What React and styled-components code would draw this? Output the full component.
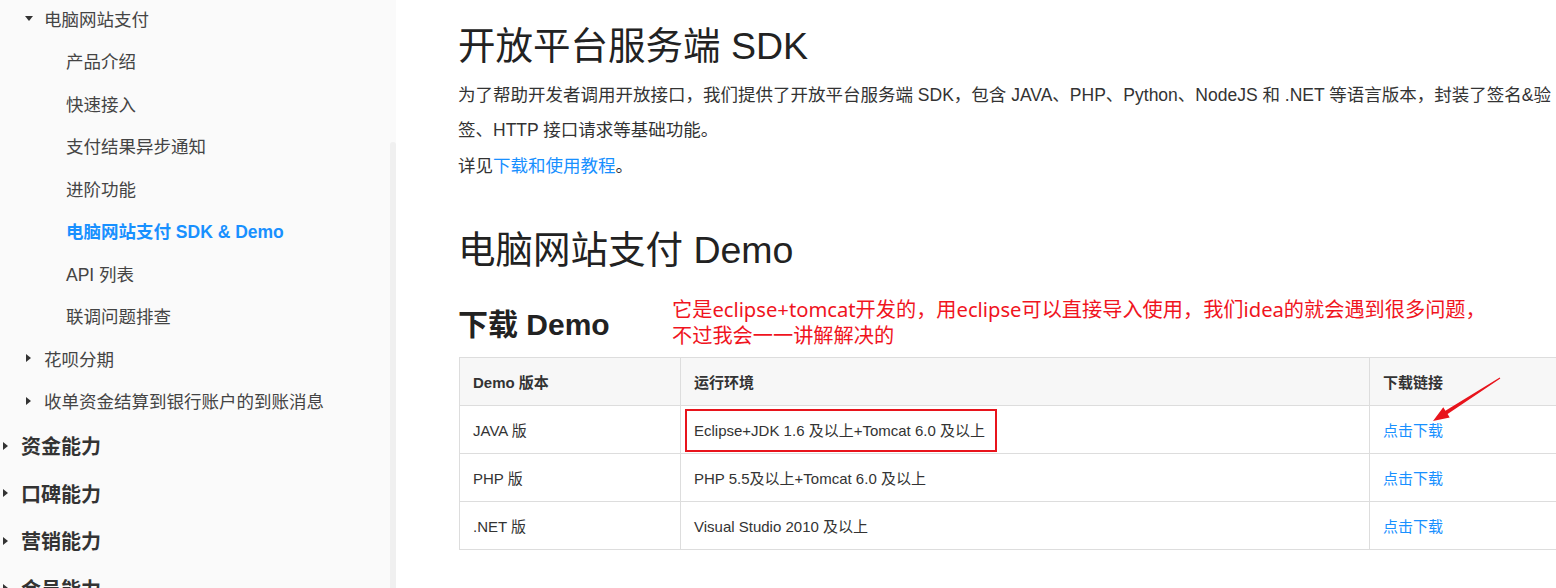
import React from "react";
import styled, { createGlobalStyle } from "styled-components";

const GlobalStyle = createGlobalStyle`
  html, body {
    margin: 0;
    padding: 0;
    background: #fff;
    overflow: hidden;
  }
  body {
    font-family: "Liberation Sans", "Noto Sans CJK SC", sans-serif;
    color: #333;
  }
  * {
    box-sizing: border-box;
  }
`;

const Page = styled.div`
  position: relative;
  display: flex;
  width: 1556px;
  height: 588px;
  overflow: hidden;
`;

const Sidebar = styled.aside`
  position: relative;
  flex: 0 0 396px;
  height: 100%;
  background: #fafafa;
  overflow: hidden;
`;

const ScrollThumb = styled.div`
  position: absolute;
  right: 0;
  top: 142px;
  bottom: 0;
  width: 6px;
  background: #f0f0f0;
  border-radius: 3px 3px 0 0;
`;

const Menu = styled.ul`
  list-style: none;
  margin: -3px 0 0;
  padding: 0;
  display: flex;
  flex-direction: column;
`;

const MenuItem = styled.li`
  position: relative;
  display: flex;
  align-items: center;
  height: ${(p) => (p.$top ? "47.5px" : "42.5px")};
  padding-left: ${(p) => p.$indent}px;
  font-size: ${(p) => (p.$top ? "20px" : "17.5px")};
  font-weight: ${(p) => (p.$top || p.$active ? 700 : 400)};
  color: ${(p) => (p.$active ? "#1890ff" : p.$top ? "#333" : "#444")};
  white-space: nowrap;
`;

const Caret = styled.span`
  position: absolute;
  left: ${(p) => p.$left}px;
  top: 50%;
  width: 0;
  height: 0;
  ${(p) =>
    p.$open
      ? `
    margin-top: -2px;
    border-left: 4px solid transparent;
    border-right: 4px solid transparent;
    border-top: 5px solid #333;
  `
      : `
    margin-top: -4px;
    border-top: 4px solid transparent;
    border-bottom: 4px solid transparent;
    border-left: 5px solid #333;
  `}
`;

const Main = styled.main`
  flex: 1;
  padding-left: 62px;
  overflow: hidden;
`;

const Title = styled.h1`
  margin: 21px 0 0;
  font-size: 37.5px;
  line-height: 50px;
  font-weight: 400;
  color: #222;
  white-space: nowrap;
`;

const Paragraph = styled.p`
  margin: ${(p) => (p.$first ? "6.5px" : "0")} 0 0;
  font-size: 17.5px;
  line-height: 35.5px;
  color: #333;
  width: 1100px;
`;

const Link = styled.a`
  color: #1890ff;
  text-decoration: none;
`;

const SectionTitle = styled.h2`
  margin: 41px 0 0;
  font-size: 37.5px;
  line-height: 50px;
  font-weight: 400;
  color: #222;
`;

const SubHeader = styled.div`
  position: relative;
  margin-top: 30px;
`;

const SubTitle = styled.h3`
  margin: 0;
  font-size: 30px;
  line-height: 40px;
  font-weight: 700;
  color: #222;
`;

const Note = styled.div`
  position: absolute;
  left: 214px;
  top: -9px;
  font-family: "Noto Sans", "Noto Sans CJK SC", sans-serif;
  font-size: 20.2px;
  line-height: 26px;
  color: #f0141e;
  white-space: nowrap;
`;

const Table = styled.table`
  margin-top: 12px;
  margin-left: 1px;
  width: 1130px;
  border-collapse: collapse;
  font-size: 15px;
  table-layout: fixed;
`;

const Th = styled.th`
  height: 48px;
  padding: 0 13px;
  background: #f7f7f7;
  border: 1px solid #dddddd;
  text-align: left;
  font-weight: 700;
  color: #333;
  white-space: nowrap;
`;

const Td = styled.td`
  position: relative;
  height: 48px;
  padding: 0 13px;
  border: 1px solid #dddddd;
  color: #333;
  white-space: nowrap;
`;

const Highlight = styled.span`
  position: absolute;
  left: 4px;
  top: 3px;
  width: 312px;
  height: 43px;
  border: 2px solid #e8141c;
  pointer-events: none;
`;

const Overlay = styled.svg`
  position: absolute;
  left: 0;
  top: 0;
  pointer-events: none;
`;

const subMenu = [
  "产品介绍",
  "快速接入",
  "支付结果异步通知",
  "进阶功能",
  "电脑网站支付 SDK & Demo",
  "API 列表",
  "联调问题排查",
];

const rows = [
  { name: "JAVA 版", env: "Eclipse+JDK 1.6 及以上+Tomcat 6.0 及以上", mark: true },
  { name: "PHP 版", env: "PHP 5.5及以上+Tomcat 6.0 及以上" },
  { name: ".NET 版", env: "Visual Studio 2010 及以上" },
];

const App = () => {
  return (
    <Page>
      <GlobalStyle />
      <Sidebar>
        <Menu>
          <MenuItem $indent={44}>
            <Caret $left={25} $open />
            电脑网站支付
          </MenuItem>
          {subMenu.map((item, i) => (
            <MenuItem key={item} $indent={66} $active={i === 4}>
              {item}
            </MenuItem>
          ))}
          <MenuItem $indent={44}>
            <Caret $left={26} />
            花呗分期
          </MenuItem>
          <MenuItem $indent={44}>
            <Caret $left={26} />
            收单资金结算到银行账户的到账消息
          </MenuItem>
          {["资金能力", "口碑能力", "营销能力", "会员能力"].map((item) => (
            <MenuItem key={item} $indent={21} $top>
              <Caret $left={3} />
              {item}
            </MenuItem>
          ))}
        </Menu>
        <ScrollThumb />
      </Sidebar>

      <Main>
        <Title>开放平台服务端 SDK</Title>
        <Paragraph $first>
          为了帮助开发者调用开放接口，我们提供了开放平台服务端 SDK，包含 JAVA、PHP、Python、NodeJS 和 .NET 等语言版本，封装了签名&验签、HTTP 接口请求等基础功能。
        </Paragraph>
        <Paragraph>
          详见<Link href="#">下载和使用教程</Link>。
        </Paragraph>

        <SectionTitle>电脑网站支付 Demo</SectionTitle>
        <SubHeader>
          <SubTitle>下载 Demo</SubTitle>
          <Note>
            它是eclipse+tomcat开发的，用eclipse可以直接导入使用，我们idea的就会遇到很多问题，
            <br />
            不过我会一一讲解解决的
          </Note>
        </SubHeader>

        <Table>
          <colgroup>
            <col style={{ width: 221 }} />
            <col style={{ width: 689 }} />
            <col />
          </colgroup>
          <thead>
            <tr>
              <Th>Demo 版本</Th>
              <Th>运行环境</Th>
              <Th>下载链接</Th>
            </tr>
          </thead>
          <tbody>
            {rows.map((r) => (
              <tr key={r.name}>
                <Td>{r.name}</Td>
                <Td>
                  {r.env}
                  {r.mark && <Highlight />}
                </Td>
                <Td>
                  <Link href="#">点击下载</Link>
                </Td>
              </tr>
            ))}
          </tbody>
        </Table>
      </Main>

      <Overlay width="1556" height="588" viewBox="0 0 1556 588">
        <polygon
          fill="#e8141c"
          points="1500.3,378.4 1447.6,414.1 1449.7,417.4 1433,421 1443.3,407.3 1445.4,410.7 1499.7,377.6"
        />
      </Overlay>
    </Page>
  );
};

export default App;
